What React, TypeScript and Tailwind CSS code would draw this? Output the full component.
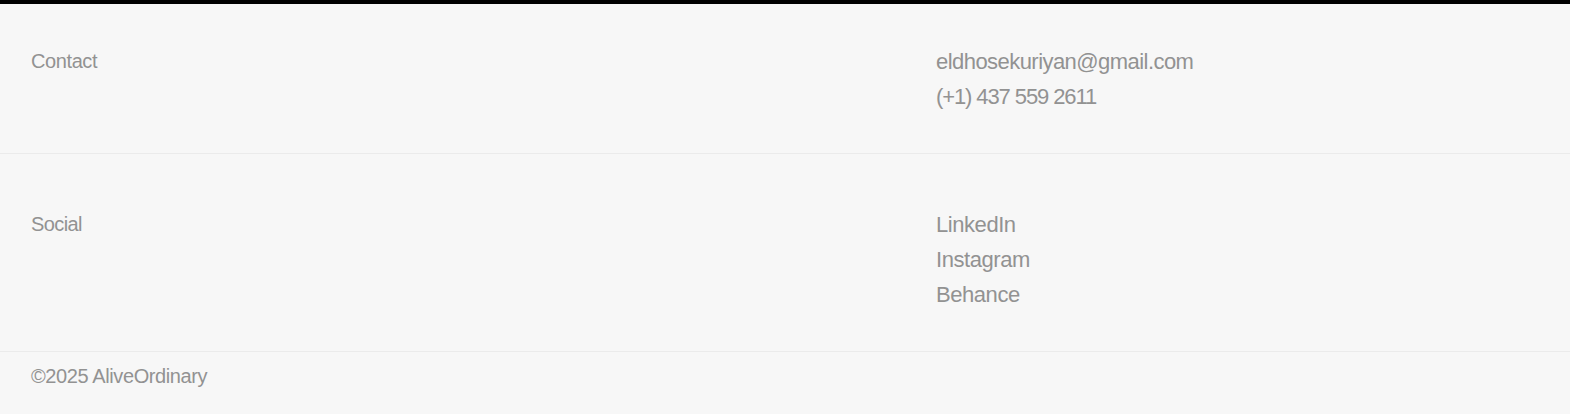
import React from "react";

export default function App() {
  const font = { fontFamily: '"Liberation Sans", Arial, sans-serif' };
  return (
    <div className="min-h-[414px] w-full bg-[#f7f7f7] text-[#929292]" style={font}>
      <div className="h-[4px] bg-black" />
      <section className="grid grid-cols-5 px-[30px] pt-[40px] pb-[39px] border-b border-[#ebebeb]">
        <div className="col-span-3 pl-px text-[20px] leading-[35px] tracking-[-0.02em]">Contact</div>
        <div className="col-span-2 flex flex-col text-[22px] leading-[35px] tracking-[-0.025em]">
          <span>eldhosekuriyan@gmail.com</span>
          <span className="tracking-[-0.05em]">(+1) 437 559 2611</span>
        </div>
      </section>
      <section className="grid grid-cols-5 px-[30px] pt-[53px] pb-[39px] border-b border-[#ebebeb]">
        <div className="col-span-3 pl-px text-[20px] leading-[35px] tracking-[-0.03em]">Social</div>
        <div className="col-span-2 flex flex-col text-[22px] leading-[35px] tracking-[-0.02em]">
          <span>LinkedIn</span>
          <span>Instagram</span>
          <span>Behance</span>
        </div>
      </section>
      <footer className="px-[31px] pt-[12px] pb-[26px] text-[20px] leading-[24px] tracking-[-0.02em]">
        ©2025 AliveOrdinary
      </footer>
    </div>
  );
}
